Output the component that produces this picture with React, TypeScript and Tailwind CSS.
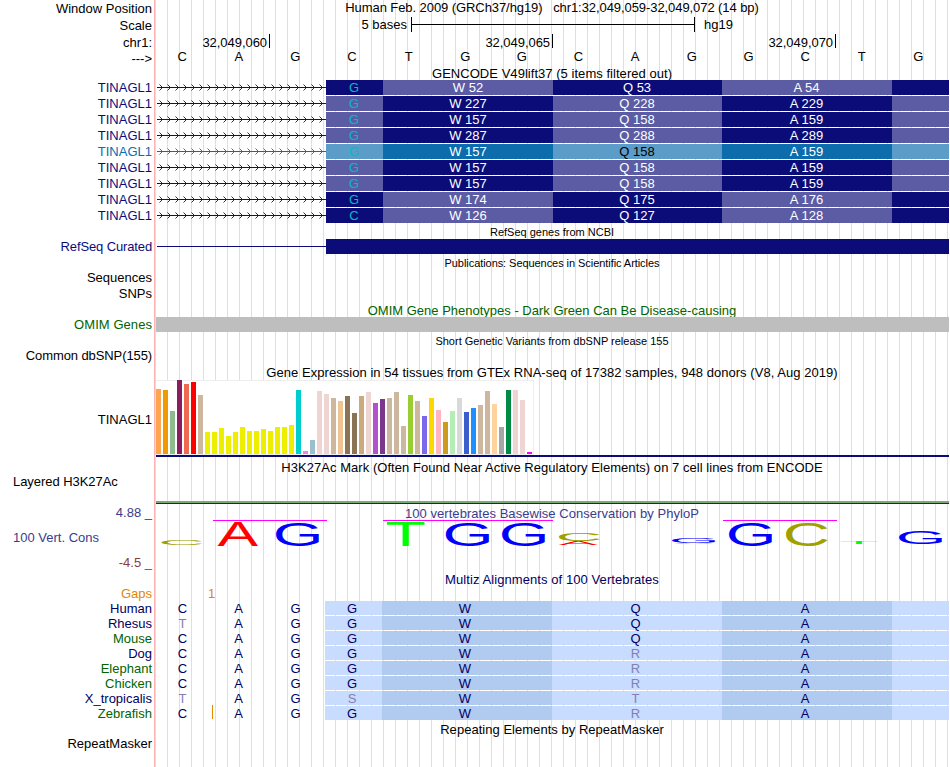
import type { ReactNode } from "react";

type RowProps = {
  size: string;
  label?: ReactNode;
  labelClass?: string;
  children?: ReactNode;
};

function Row({ size, label, labelClass = "", children }: RowProps) {
  return (
    <div className={`flex shrink-0 ${size}`}>
      <div className={`w-[155px] shrink-0 border-r border-[#ffb4b4] bg-white pr-[2px] text-right whitespace-nowrap ${labelClass}`}>
        {label}
      </div>
      <div className="relative w-[794px] shrink-0">{children}</div>
    </div>
  );
}

function Title({ children, className = "" }: { children: ReactNode; className?: string }) {
  return <div className={`text-center whitespace-pre ${className}`}>{children}</div>;
}

const BASES = "CAGCTGGCAGGCTG".split("");

type Gene = { base: string; nums: [number, number, number]; darkFirst?: boolean; blue?: boolean };

const GENES: Gene[] = [
  { base: "G", nums: [52, 53, 54], darkFirst: true },
  { base: "G", nums: [227, 228, 229] },
  { base: "G", nums: [157, 158, 159] },
  { base: "G", nums: [287, 288, 289] },
  { base: "G", nums: [157, 158, 159], blue: true },
  { base: "G", nums: [157, 158, 159] },
  { base: "G", nums: [157, 158, 159] },
  { base: "G", nums: [174, 175, 176], darkFirst: true },
  { base: "C", nums: [126, 127, 128], darkFirst: true },
];

function Intron({ color }: { color: string }) {
  return (
    <svg width="171" height="15" className="block shrink-0" fill="none" stroke={color}>
      <path d="M2 7.5H171" shapeRendering="crispEdges" />
      {Array.from({ length: 21 }, (_, i) => (
        <path key={i} strokeWidth="0.9" d={`M${4.5 + i * 8} 4.5l3 3l-3 3`} />
      ))}
    </svg>
  );
}

function GeneRow({ gene }: { gene: Gene }) {
  const dark = gene.blue ? "bg-[#0c6cac]" : "bg-[#0c0c78]";
  const light = gene.blue ? "bg-[#5c9cc8]" : "bg-[#5c5ca4]";
  const a = gene.darkFirst ? dark : light;
  const b = gene.darkFirst ? light : dark;
  return (
    <Row
      size="h-4"
      label="TINAGL1"
      labelClass={gene.blue ? "text-[#0c6cac]" : "text-[#0c0c78]"}
    >
      <div className="flex h-[15px] text-center text-white">
        <Intron color={gene.blue ? "#0c6cac" : "#0c0c78"} />
        <div className={`w-[57px] pr-px text-[#00bcc4] ${a}`}>{gene.base}</div>
        <div className={`w-[170px] ${b}`}>W {gene.nums[0]}</div>
        <div className={`w-[169px] pr-px ${a} ${gene.blue ? "text-black" : ""}`}>Q {gene.nums[1]}</div>
        <div className={`w-[170px] pr-px ${b}`}>A {gene.nums[2]}</div>
        <div className={`w-[57px] ${a}`} />
      </div>
    </Row>
  );
}

const YELLOW = "#eeee00";
const TAN = "#cdb79e";
const ROSE = "#eed5d2";

const TISSUES: [number, string][] = [
  [65, "#ffa54f"], [64, "#ee9a00"], [43, "#8fbc8f"], [74, "#8b1c62"], [70, "#ee6a50"], [72, "#ff0000"], [59, TAN],
  [22, YELLOW], [22, YELLOW], [26, YELLOW], [18, YELLOW], [22, YELLOW], [27, YELLOW], [23, YELLOW], [23, YELLOW],
  [25, YELLOW], [23, YELLOW], [27, YELLOW], [27, YELLOW], [29, YELLOW],
  [64, "#00cdcd"], [3, "#ee82ee"], [14, "#9ac0cd"], [63, ROSE], [60, ROSE], [56, TAN], [53, "#eec591"],
  [58, "#8b7355"], [41, "#8b7355"], [58, "#cdaa7d"], [62, ROSE], [51, "#b452cd"], [55, "#7a378b"], [56, TAN],
  [62, TAN], [28, TAN], [59, "#9acd32"], [53, TAN], [38, "#7a67ee"], [56, "#ffd700"], [44, "#ffb6c1"],
  [32, "#cd9b1d"], [43, "#b4eeb4"], [56, "#d9d9d9"], [42, "#3a5fcd"], [46, "#1e90ff"], [49, TAN], [63, TAN],
  [50, "#ffd39b"], [27, "#a6a6a6"], [64, "#008b45"], [64, ROSE], [54, ROSE], [2, "#ff00ff"],
];

// Ink extents of each glyph in em units: left, right, bottom, top.
const INK: Record<string, [number, number, number, number]> = {
  A: [0.001, 0.665, 0, 0.688],
  C: [0.05, 0.677, -0.01, 0.698],
  G: [0.05, 0.708, -0.01, 0.698],
  T: [0.021, 0.59, 0, 0.688],
};

// Letter, colour, left, right, top, bottom.
const LOGO: [string, string, number, number, number, number][] = [
  ["C", "#a0a000", 6.5, 47, 36, 41],
  ["A", "#ff0000", 62.5, 103, 18, 42],
  ["G", "#0000ff", 121, 164, 18, 42],
  ["T", "#00ff00", 232, 269.7, 18, 42],
  ["G", "#0000ff", 290.7, 334, 18, 42],
  ["G", "#0000ff", 347, 390, 18, 42],
  ["C", "#a0a000", 404, 444.5, 30, 37.4],
  ["A", "#ff0000", 403.5, 442.5, 37.3, 41],
  ["G", "#0000ff", 517, 560, 34, 39.3],
  ["A", "#ff4040", 519, 558, 39, 40.4],
  ["G", "#0000ff", 574, 617, 18, 42],
  ["C", "#a0a000", 631, 672, 18, 42],
  ["T", "#00ff00", 685.5, 722.5, 38, 40],
  ["G", "#0000ff", 744, 787, 27, 40],
];

function ConservationLogo() {
  return (
    <svg width="794" height="68" className="absolute inset-0">
      <path
        d="M58 16.5H172M228 16.5H398M568 16.5H682"
        stroke="#ff00ff"
        strokeWidth="1"
        shapeRendering="crispEdges"
      />
      {LOGO.map(([ch, color, l, r, t, b], i) => {
        const [il, ir, ib, it] = INK[ch];
        const sx = (r - l) / ((ir - il) * 100);
        const sy = (b - t) / ((it - ib) * 100);
        return (
          <text
            key={i}
            fontSize="100"
            fill={color}
            transform={`matrix(${sx} 0 0 ${sy} ${l - il * 100 * sx} ${b + ib * 100 * sy})`}
          >
            {ch}
          </text>
        );
      })}
    </svg>
  );
}

type Species = { name: string; green?: boolean; seq: string; faded?: number[]; gap?: boolean };

const SPECIES: Species[] = [
  { name: "Human", seq: "CAGGWQA" },
  { name: "Rhesus", seq: "TAGGWQA", faded: [0] },
  { name: "Mouse", green: true, seq: "CAGGWQA" },
  { name: "Dog", seq: "CAGGWRA", faded: [5] },
  { name: "Elephant", green: true, seq: "CAGGWRA", faded: [5] },
  { name: "Chicken", green: true, seq: "CAGGWRA", faded: [5] },
  { name: "X_tropicalis", seq: "TAGSWTA", faded: [0, 3, 5] },
  { name: "Zebrafish", green: true, seq: "CAGGWRA", faded: [5], gap: true },
];

const CELLS = [
  "w-[56px] pr-px",
  "w-[56px] pr-px",
  "w-[58px] pr-px",
  "w-[57px] bg-[#c8dcff] pr-[3px]",
  "w-[170px] bg-[#b0caf0] pr-[4px]",
  "w-[170px] bg-[#c8dcff] pr-[3px]",
  "w-[170px] bg-[#b0caf0] pr-[4px]",
];

function SpeciesRow({ sp }: { sp: Species }) {
  return (
    <Row size="h-[15px]" label={sp.name} labelClass={sp.green ? "text-[#006400]" : "text-[#000064]"}>
      <div className="flex h-[14px] text-center">
        {CELLS.map((cell, i) => (
          <div key={i} className={`${cell} ${sp.faded?.includes(i) ? "text-[#8080b4]" : "text-[#000064]"}`}>
            {sp.seq[i]}
          </div>
        ))}
        <div className="w-[57px] bg-[#c8dcff]" />
      </div>
      {sp.gap && <div className="absolute top-[-1px] left-[57px] h-[14px] w-px bg-[#e18700]" />}
    </Row>
  );
}

export default function App() {
  return (
    <div className="flex h-[767px] w-[950px] flex-col overflow-hidden bg-white bg-[repeating-linear-gradient(90deg,transparent_0px,transparent_11px,#dcdcf8_11px,#dcdcf8_12px)] font-['Liberation_Sans',Arial,sans-serif] text-[13px] leading-[15px] text-black">
      <Row size="h-4" label="Window Position" labelClass="pt-px">
        <Title className="tracking-[-0.075px]">{"Human Feb. 2009 (GRCh37/hg19)   chr1:32,049,059-32,049,072 (14 bp)"}</Title>
      </Row>
      <Row size="h-[18px]" label="Scale" labelClass="pt-[2px]">
        <div className="flex pt-px">
          <div className="w-[253px] pr-px text-right">5 bases</div>
          <div className="ml-[3px] flex h-[15px] w-[284px] items-center border-x border-black">
            <div className="h-px w-full bg-black" />
          </div>
          <div className="ml-[9px]">hg19</div>
        </div>
      </Row>
      <Row size="h-[15px]" label="chr1:" labelClass="pt-px">
        <div className="flex text-right tracking-[-0.05px]">
          {["32,049,060", "32,049,065", "32,049,070"].map((pos, i) => (
            <div
              key={pos}
              className={`h-[14px] shrink-0 border-r border-black pt-px pr-[2px] ${i === 0 ? "w-[115px]" : "w-[283px]"}`}
            >
              {pos}
            </div>
          ))}
        </div>
      </Row>
      <Row size="h-[17px]" label="--->" labelClass="pt-[2px]">
        <div className="-ml-[1.25px] flex w-[793px] text-center">
          {BASES.map((b, i) => (
            <div key={i} className="flex-1">
              {b}
            </div>
          ))}
        </div>
      </Row>
      <Row size="h-[14px]">
        <Title className="tracking-[0.04px]">GENCODE V49lift37 (5 items filtered out)</Title>
      </Row>
      {GENES.map((g, i) => (
        <GeneRow key={i} gene={g} />
      ))}
      <Row size="h-[15px]">
        <Title className="pt-px text-[11px]">RefSeq genes from NCBI</Title>
      </Row>
      <Row size="h-[15px]" label="RefSeq Curated" labelClass="text-[#0c0c78] tracking-[-0.13px]">
        <div className="flex h-full items-center pl-[2px]">
          <div className="h-px w-[169px] bg-[#0c0c78]" />
          <div className="h-full w-[623px] bg-[#0c0c78]" />
        </div>
      </Row>
      <Row size="h-4">
        <Title className="pt-[2px] text-[11px] tracking-[-0.06px]">Publications: Sequences in Scientific Articles</Title>
      </Row>
      <Row size="h-4" label="Sequences" />
      <Row size="h-[17px]" label="SNPs" />
      <Row size="h-[14px]">
        <Title className="text-[#006400]">OMIM Gene Phenotypes - Dark Green Can Be Disease-causing</Title>
      </Row>
      <Row size="h-[15px]" label="OMIM Genes" labelClass="text-[#006400] tracking-[0.06px]">
        <div className="relative ml-px h-full bg-[#bebebe]" />
      </Row>
      <Row size="h-4">
        <Title className="pt-[2px] text-[11px]">Short Genetic Variants from dbSNP release 155</Title>
      </Row>
      <Row size="h-[17px]" label="Common dbSNP(155)" labelClass="tracking-[-0.1px]" />
      <Row size="h-[15px]">
        <Title className="tracking-[0.045px]">
          Gene Expression in 54 tissues from GTEx RNA-seq of 17382 samples, 948 donors (V8, Aug 2019)
        </Title>
      </Row>
      <Row size="h-[77px]" label="TINAGL1" labelClass="pt-8">
        <div className="ml-px flex h-[75px] w-[378px] items-end gap-[2px] border border-l-0 border-[#eeeeee] bg-white">
          {TISSUES.map(([h, color], i) => (
            <div key={i} className="w-[5px] shrink-0" style={{ height: h, backgroundColor: color }} />
          ))}
        </div>
        <div className="ml-px h-[2px] bg-[#0c0c78]" />
      </Row>
      <Row size="h-11" label="Layered H3K27Ac" labelClass="pt-[17px] pl-[13px] text-left! tracking-[-0.05px]">
        <Title className="pt-[3px] tracking-[0.045px]">
          H3K27Ac Mark (Often Found Near Active Regulatory Elements) on 7 cell lines from ENCODE
        </Title>
      </Row>
      <Row size="h-[3px]">
        <div className="ml-px h-[3px] border-b border-[#142850] bg-[#78aa78]" />
      </Row>
      <Row
        size="h-[68px]"
        labelClass="pt-px"
        label={
          <div className="flex flex-col gap-[10px]">
            <div className="text-[#3c3c8c]">4.88 _</div>
            <div className="pl-[13px] text-left text-[#3c3c8c]">100 Vert. Cons</div>
            <div className="text-[#8c3c3c]">-4.5 _</div>
          </div>
        }
      >
        <Title className="pt-[2px] tracking-[0.04px] text-[#3c3c8c]">100 vertebrates Basewise Conservation by PhyloP</Title>
        <ConservationLogo />
      </Row>
      <Row size="h-[14px]">
        <Title className="tracking-[0.08px] text-[#000064]">Multiz Alignments of 100 Vertebrates</Title>
      </Row>
      <Row size="h-[15px]" label="Gaps" labelClass="text-[#e18700]">
        <div className="pl-[53px] text-[#e18700]">1</div>
      </Row>
      {SPECIES.map((sp) => (
        <SpeciesRow key={sp.name} sp={sp} />
      ))}
      <Row size="h-[15px]">
        <Title className="pt-px tracking-[0.03px]">Repeating Elements by RepeatMasker</Title>
      </Row>
      <Row size="h-[31px]" label="RepeatMasker" />
    </div>
  );
}
